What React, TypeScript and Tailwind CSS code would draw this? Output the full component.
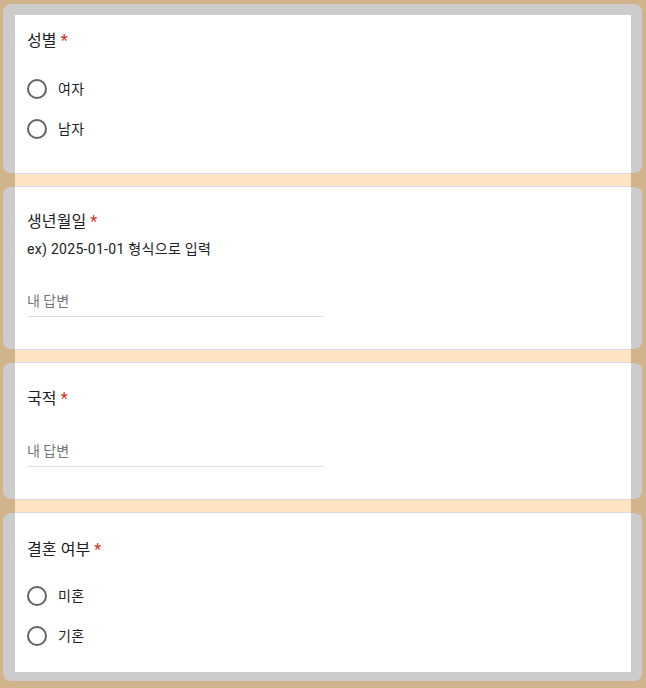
import React from "react";

const FONT = { fontFamily: 'Roboto, "Noto Sans CJK KR", "Noto Sans", sans-serif' };

function Title({ text }: { text: string }) {
  return (
    <div className="text-[16px] leading-[24px] text-[#202124] tracking-[0.1px]">
      {text}
      <span className="text-[#d93025] ml-[4px]">*</span>
    </div>
  );
}

function Radio({ label, h }: { label: string; h: string }) {
  return (
    <div className={`${h} flex items-center`}>
      <div className="w-[20px] h-[20px] rounded-full border-2 border-[#5f6368] box-border" />
      <span className="ml-[11px] text-[14px] leading-[20px] text-[#202124] tracking-[0.3px]">{label}</span>
    </div>
  );
}

function Band() {
  return (
    <div className="h-[14px] ml-[12px] mr-[11px] bg-[#ffe4c4] border-y border-[#d9d5e3]" />
  );
}

function Input({ pb }: { pb: string }) {
  return (
    <div className={`w-[296px] border-b border-[#e0e0e0] text-[14px] leading-[20px] text-[#70757a] ${pb}`}>
      내 답변
    </div>
  );
}

export default function App() {
  return (
    <div className="min-h-screen bg-[#d2b48c] pt-[4px] pl-[3px] pr-[4px]" style={FONT}>
      {/* Card 1 */}
      <div className="bg-[#cccccc] rounded-lg pt-[11px] pl-[12px] pr-[11px]">
        <div className="bg-white h-[158px] px-[12px] pt-[14px]">
          <Title text="성별" />
          <div className="mt-[16px]">
            <Radio label="여자" h="h-[40px]" />
            <Radio label="남자" h="h-[39px]" />
          </div>
        </div>
      </div>
      <Band />
      {/* Card 2 */}
      <div className="bg-[#cccccc] rounded-lg pl-[12px] pr-[11px]">
        <div className="bg-white h-[162px] px-[12px] pt-[23px]">
          <Title text="생년월일" />
          <div className="mt-[5px] text-[14px] leading-[20px] text-[#202124] tracking-[0.3px]">
            ex) 2025-01-01 형식으로 입력
          </div>
          <div className="mt-[32px]">
            <Input pb="pb-[5px]" />
          </div>
        </div>
      </div>
      <Band />
      {/* Card 3 */}
      <div className="bg-[#cccccc] rounded-lg pl-[12px] pr-[11px]">
        <div className="bg-white h-[136px] px-[12px] pt-[24px]">
          <Title text="국적" />
          <div className="mt-[30px]">
            <Input pb="pb-[5px]" />
          </div>
        </div>
      </div>
      <Band />
      {/* Card 4 */}
      <div className="bg-[#cccccc] rounded-lg pl-[12px] pr-[11px] pb-[9px]">
        <div className="bg-white h-[159px] px-[12px] pt-[25px]">
          <Title text="결혼 여부" />
          <div className="mt-[14px]">
            <Radio label="미혼" h="h-[40px]" />
            <Radio label="기혼" h="h-[40px]" />
          </div>
        </div>
      </div>
    </div>
  );
}
